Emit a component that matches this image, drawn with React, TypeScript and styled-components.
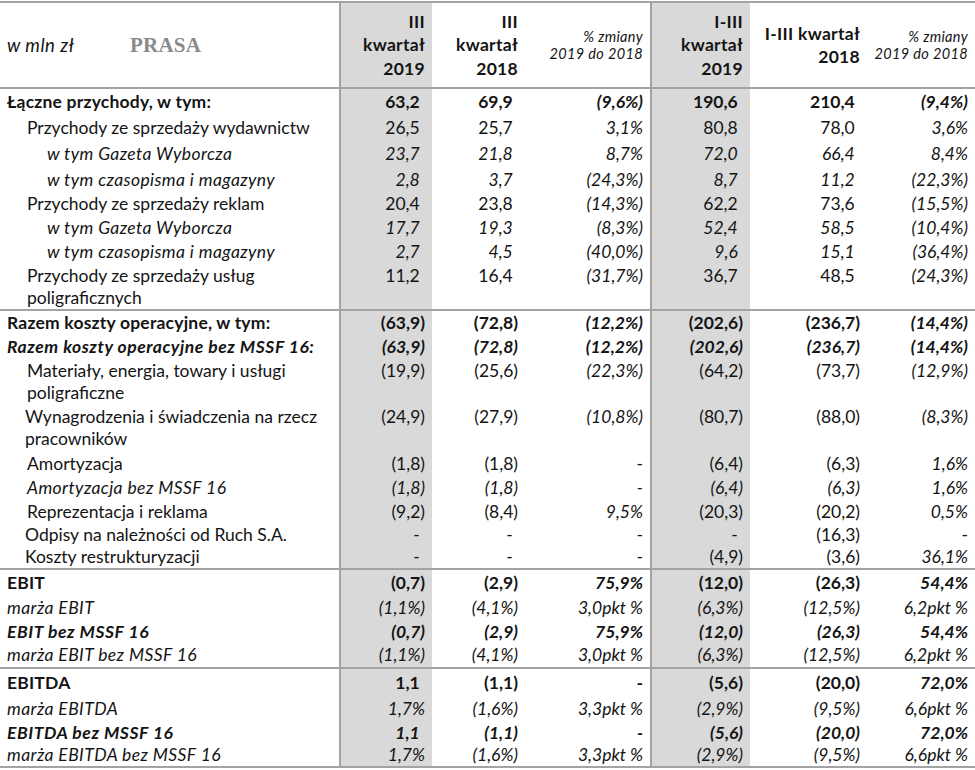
import React from "react";
import styled, { createGlobalStyle, css } from "styled-components";

const LINE = "#a3a3a3";
const SHADE = "#d9d9d9";
const INK = "#141414";
const COLS = "339px 93px 93px 125px 100px 117px 108px";

const Global = createGlobalStyle`
  html, body { margin: 0; padding: 0; background: #fff; }
  body { font-family: Lato, "Open Sans", "Liberation Sans", sans-serif; color: ${INK}; }
`;

const Sheet = styled.div`
  width: 975px;
  margin-top: 1px;
  border-top: 2px solid ${LINE};
  border-bottom: 2px solid ${LINE};
  font-size: 17.5px;
  line-height: 22px;
`;

const HeaderRow = styled.div`
  display: grid;
  grid-template-columns: ${COLS};
  height: 84px;
`;

const Section = styled.div`
  border-top: 2px solid ${LINE};
`;

const Row = styled.div<{ $h: number }>`
  display: grid;
  grid-template-columns: ${COLS};
  height: ${(p) => p.$h}px;
  overflow: hidden;
  align-items: stretch;
`;

type Weight = { $b?: boolean; $i?: boolean };

const shadeCss = css<{ $shade?: boolean; $divider?: boolean }>`
  background: ${(p) => (p.$shade ? SHADE : "transparent")};
  border-left: ${(p) => (p.$divider ? `2px solid ${LINE}` : "none")};
`;

const weightCss = css<Weight>`
  font-weight: ${(p) => (p.$b ? "bold" : "normal")};
  font-style: ${(p) => (p.$i ? "italic" : "normal")};
  letter-spacing: ${(p) => (p.$b && p.$i ? "0.55px" : p.$i ? "0.4px" : p.$b ? "0.2px" : "0")};
`;

const LabelHead = styled.div`
  display: flex;
  align-items: center;
  padding-left: 7px;
`;

const Unit = styled.span`
  font-style: italic;
  font-size: 18.5px;
  letter-spacing: 0.5px;
  width: 123px;
`;

const Brand = styled.span`
  font-family: "Liberation Serif", "DejaVu Serif", serif;
  font-weight: bold;
  font-size: 21px;
  color: #8a8a8a;
  letter-spacing: 0.2px;
`;

const HeadCell = styled.div<{ $shade?: boolean; $divider?: boolean; $small?: boolean }>`
  box-sizing: border-box;
  ${shadeCss};
  display: flex;
  align-items: center;
  justify-content: flex-end;
  text-align: right;
  padding-right: 7px;
  font-weight: ${(p) => (p.$small ? "normal" : "bold")};
  font-style: ${(p) => (p.$small ? "italic" : "normal")};
  font-size: ${(p) => (p.$small ? "14.5px" : "17.5px")};
  letter-spacing: ${(p) => (p.$small ? "0.35px" : "0.3px")};
  line-height: ${(p) => (p.$small ? "17px" : "23.5px")};
`;

const Label = styled.div<Weight & { $indent: number; $wrap?: boolean }>`
  box-sizing: border-box;
  padding-left: ${(p) => p.$indent}px;
  padding-right: 4px;
  padding-top: ${(p) => (p.$wrap ? "1px" : "0")};
  display: flex;
  align-items: ${(p) => (p.$wrap ? "flex-start" : "center")};
  ${weightCss};
  white-space: nowrap;
`;

const Value = styled.div<Weight & { $shade?: boolean; $divider?: boolean; $wrap?: boolean }>`
  box-sizing: border-box;
  ${shadeCss};
  display: flex;
  justify-content: flex-end;
  align-items: ${(p) => (p.$wrap ? "flex-start" : "center")};
  padding-top: ${(p) => (p.$wrap ? "1px" : "0")};
  padding-right: 7px;
  font-weight: ${(p) => (p.$b ? "bold" : "normal")};
  font-style: ${(p) => (p.$i ? "italic" : "normal")};
  white-space: nowrap;
`;

const Num = styled.span<{ $pad?: boolean }>`
  padding-right: ${(p) => (p.$pad ? "0.3em" : "0")};
`;

type Kind = "bold" | "boldItalic" | "italic" | "normal";

type RowData = {
  label: React.ReactNode;
  vals: string[];
  kind: Kind;
  indent: number;
  h: number;
  wrap?: boolean;
};

const sections: RowData[][] = [
  [
    { label: "Łączne przychody, w tym:", vals: ["63,2", "69,9", "(9,6%)", "190,6", "210,4", "(9,4%)"], kind: "bold", indent: 7, h: 26 },
    { label: "Przychody ze sprzedaży wydawnictw", vals: ["26,5", "25,7", "3,1%", "80,8", "78,0", "3,6%"], kind: "normal", indent: 27, h: 26 },
    { label: "w tym Gazeta Wyborcza", vals: ["23,7", "21,8", "8,7%", "72,0", "66,4", "8,4%"], kind: "italic", indent: 47, h: 26 },
    { label: "w tym czasopisma i magazyny", vals: ["2,8", "3,7", "(24,3%)", "8,7", "11,2", "(22,3%)"], kind: "italic", indent: 47, h: 25 },
    { label: "Przychody ze sprzedaży reklam", vals: ["20,4", "23,8", "(14,3%)", "62,2", "73,6", "(15,5%)"], kind: "normal", indent: 27, h: 24 },
    { label: "w tym Gazeta Wyborcza", vals: ["17,7", "19,3", "(8,3%)", "52,4", "58,5", "(10,4%)"], kind: "italic", indent: 47, h: 24 },
    { label: "w tym czasopisma i magazyny", vals: ["2,7", "4,5", "(40,0%)", "9,6", "15,1", "(36,4%)"], kind: "italic", indent: 47, h: 24 },
    { label: <>Przychody ze sprzedaży usług<br />poligraficznych</>, vals: ["11,2", "16,4", "(31,7%)", "36,7", "48,5", "(24,3%)"], kind: "normal", indent: 27, h: 45, wrap: true },
  ],
  [
    { label: "Razem koszty operacyjne, w tym:", vals: ["(63,9)", "(72,8)", "(12,2%)", "(202,6)", "(236,7)", "(14,4%)"], kind: "bold", indent: 7, h: 24 },
    { label: "Razem koszty operacyjne bez MSSF 16:", vals: ["(63,9)", "(72,8)", "(12,2%)", "(202,6)", "(236,7)", "(14,4%)"], kind: "boldItalic", indent: 7, h: 24 },
    { label: <>Materiały, energia, towary i usługi<br />poligraficzne</>, vals: ["(19,9)", "(25,6)", "(22,3%)", "(64,2)", "(73,7)", "(12,9%)"], kind: "normal", indent: 27, h: 46, wrap: true },
    { label: <>Wynagrodzenia i świadczenia na rzecz<br />pracowników</>, vals: ["(24,9)", "(27,9)", "(10,8%)", "(80,7)", "(88,0)", "(8,3%)"], kind: "normal", indent: 25, h: 47, wrap: true },
    { label: "Amortyzacja", vals: ["(1,8)", "(1,8)", "-", "(6,4)", "(6,3)", "1,6%"], kind: "normal", indent: 27, h: 24 },
    { label: "Amortyzacja bez MSSF 16", vals: ["(1,8)", "(1,8)", "-", "(6,4)", "(6,3)", "1,6%"], kind: "italic", indent: 27, h: 24 },
    { label: "Reprezentacja i reklama", vals: ["(9,2)", "(8,4)", "9,5%", "(20,3)", "(20,2)", "0,5%"], kind: "normal", indent: 27, h: 24 },
    { label: "Odpisy na należności od Ruch S.A.", vals: ["-", "-", "-", "-", "(16,3)", "-"], kind: "normal", indent: 25, h: 22 },
    { label: "Koszty restrukturyzacji", vals: ["-", "-", "-", "(4,9)", "(3,6)", "36,1%"], kind: "normal", indent: 25, h: 22 },
  ],
  [
    { label: "EBIT", vals: ["(0,7)", "(2,9)", "75,9%", "(12,0)", "(26,3)", "54,4%"], kind: "bold", indent: 7, h: 26 },
    { label: "marża EBIT", vals: ["(1,1%)", "(4,1%)", "3,0pkt %", "(6,3%)", "(12,5%)", "6,2pkt %"], kind: "italic", indent: 7, h: 24 },
    { label: "EBIT bez MSSF 16", vals: ["(0,7)", "(2,9)", "75,9%", "(12,0)", "(26,3)", "54,4%"], kind: "boldItalic", indent: 7, h: 23 },
    { label: "marża EBIT bez MSSF 16", vals: ["(1,1%)", "(4,1%)", "3,0pkt %", "(6,3%)", "(12,5%)", "6,2pkt %"], kind: "italic", indent: 7, h: 24 },
  ],
  [
    { label: "EBITDA", vals: ["1,1", "(1,1)", "-", "(5,6)", "(20,0)", "72,0%"], kind: "bold", indent: 7, h: 28 },
    { label: "marża EBITDA", vals: ["1,7%", "(1,6%)", "3,3pkt %", "(2,9%)", "(9,5%)", "6,6pkt %"], kind: "italic", indent: 7, h: 24 },
    { label: "EBITDA bez MSSF 16", vals: ["1,1", "(1,1)", "-", "(5,6)", "(20,0)", "72,0%"], kind: "boldItalic", indent: 7, h: 23 },
    { label: "marża EBITDA bez MSSF 16", vals: ["1,7%", "(1,6%)", "3,3pkt %", "(2,9%)", "(9,5%)", "6,6pkt %"], kind: "italic", indent: 7, h: 22 },
  ],
];

const PCT_COLS = [2, 5];
const SHADE_COLS = [0, 3];

function DataRow({ r }: { r: RowData }) {
  const bold = r.kind === "bold" || r.kind === "boldItalic";
  const italicAll = r.kind === "italic" || r.kind === "boldItalic";
  return (
    <Row $h={r.h}>
      <Label $indent={r.indent} $b={bold} $i={italicAll} $wrap={r.wrap}>
        <span>{r.label}</span>
      </Label>
      {r.vals.map((v, i) => {
        const pct = PCT_COLS.includes(i);
        const pad = !pct && (/^[\d,]+$/.test(v) || v === "-");
        return (
          <Value
            key={i}
            $shade={SHADE_COLS.includes(i)}
            $divider={SHADE_COLS.includes(i)}
            $b={bold}
            $i={italicAll || (pct && v !== "-")}
            $wrap={r.wrap}
          >
            <Num $pad={pad}>{v}</Num>
          </Value>
        );
      })}
    </Row>
  );
}

export default function App() {
  return (
    <>
      <Global />
      <Sheet>
        <HeaderRow>
          <LabelHead>
            <Unit>w mln zł</Unit>
            <Brand>PRASA</Brand>
          </LabelHead>
          <HeadCell $shade $divider>
            <span>III<br />kwartał<br />2019</span>
          </HeadCell>
          <HeadCell>
            <span>III<br />kwartał<br />2018</span>
          </HeadCell>
          <HeadCell $small>
            <span>% zmiany<br />2019 do 2018</span>
          </HeadCell>
          <HeadCell $shade $divider>
            <span>I-III<br />kwartał<br />2019</span>
          </HeadCell>
          <HeadCell>
            <span>I-III kwartał<br />2018</span>
          </HeadCell>
          <HeadCell $small>
            <span>% zmiany<br />2019 do 2018</span>
          </HeadCell>
        </HeaderRow>
        {sections.map((rows, si) => (
          <Section key={si}>
            {rows.map((r, ri) => (
              <DataRow key={ri} r={r} />
            ))}
          </Section>
        ))}
      </Sheet>
    </>
  );
}
